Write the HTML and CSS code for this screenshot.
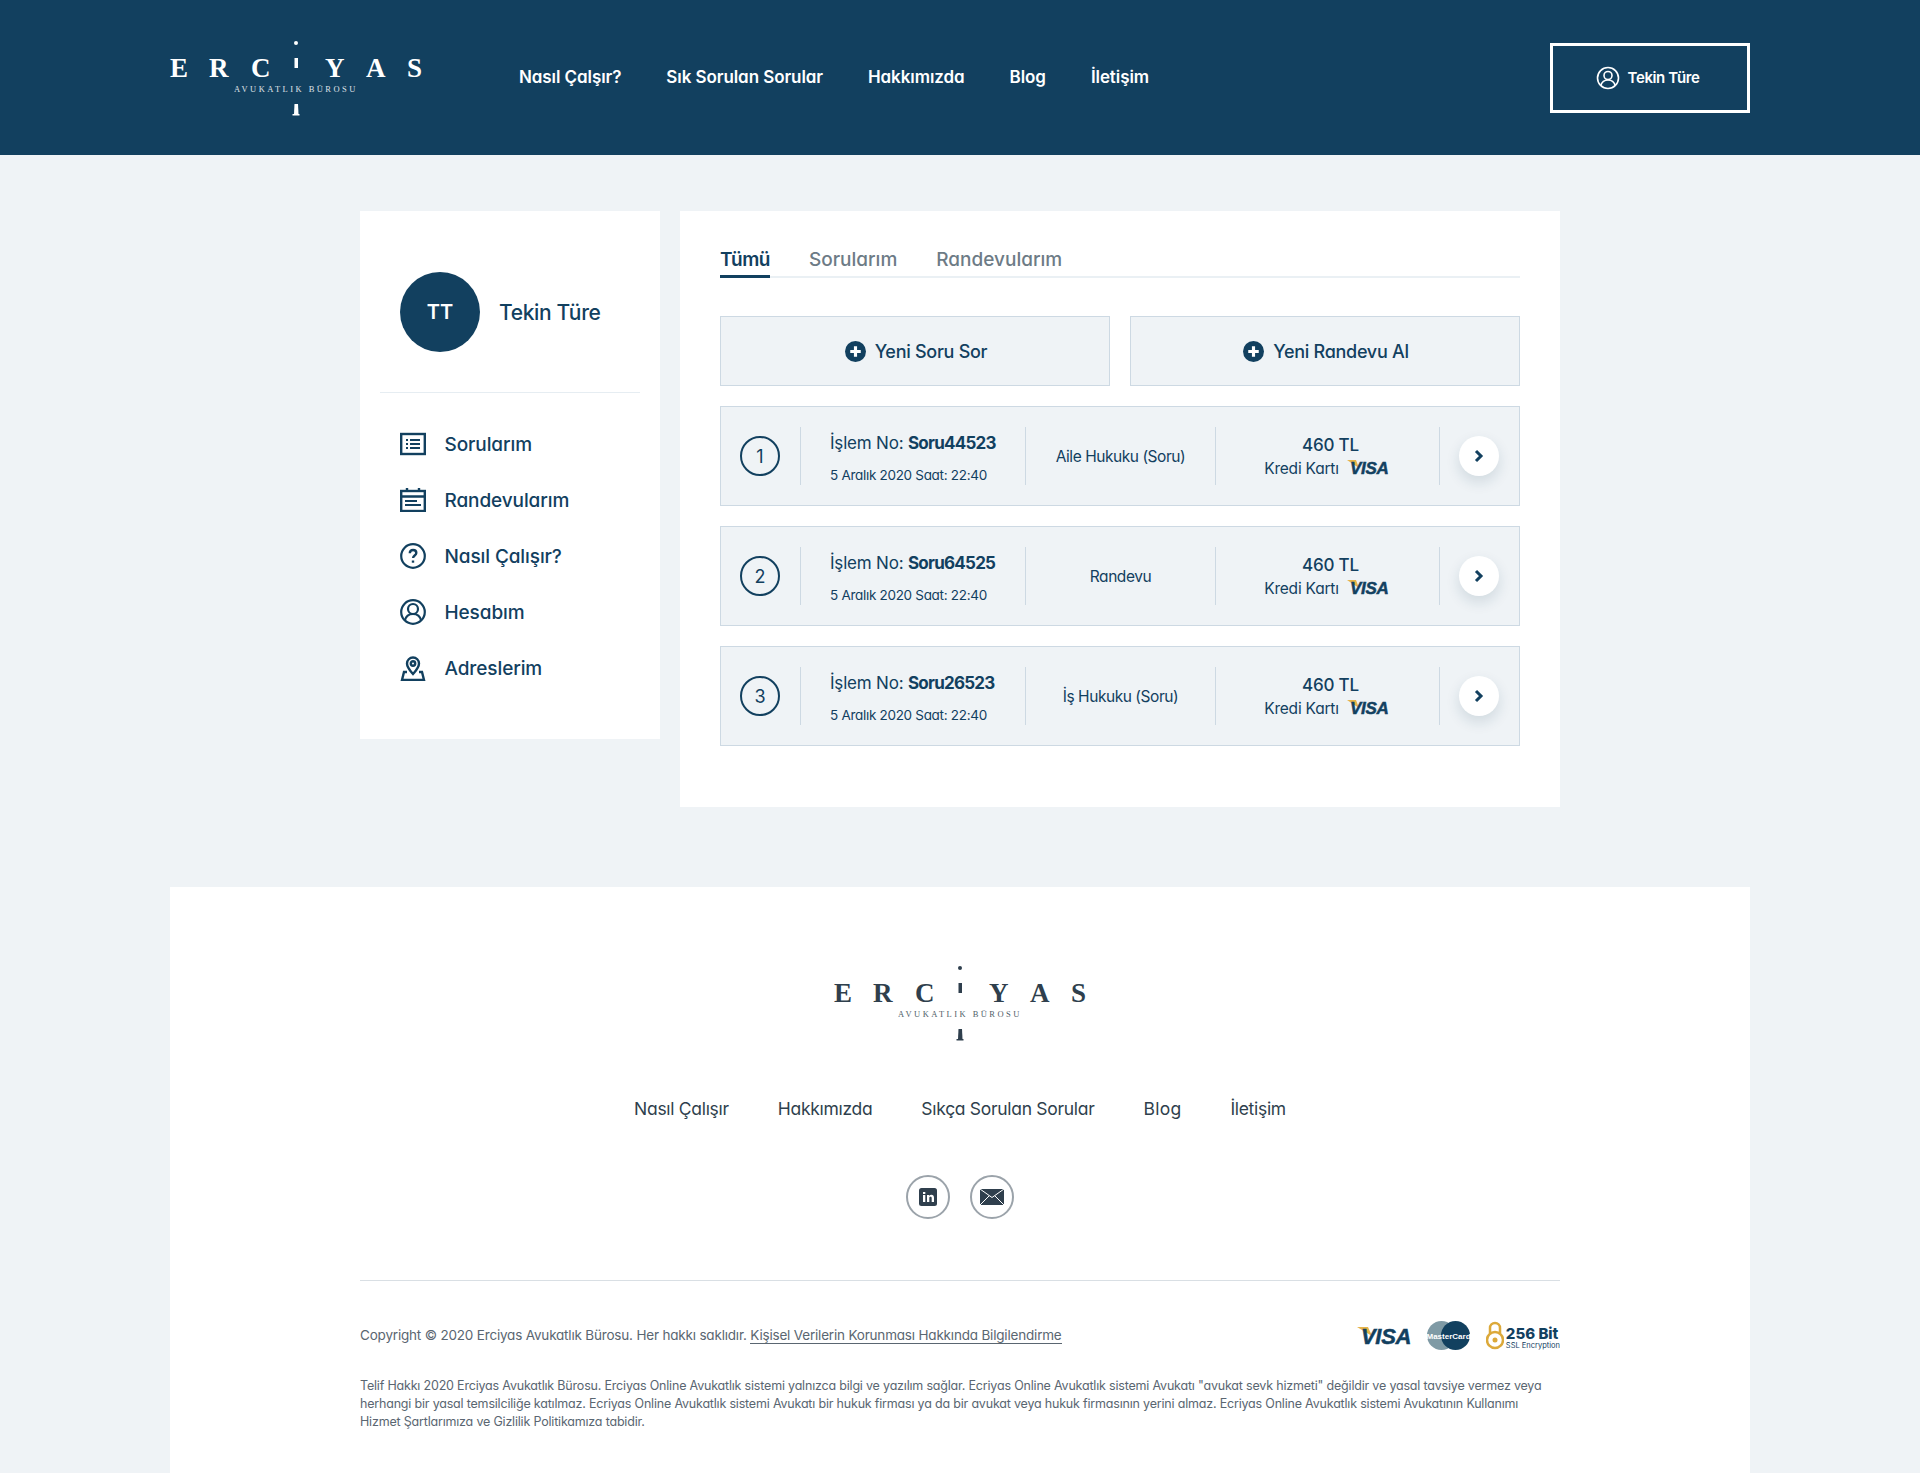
FILE: index.html
```html
<!DOCTYPE html>
<html lang="tr">
<head>
<meta charset="utf-8">
<title>Erciyas Avukatlık Bürosu</title>
<link rel="stylesheet" href="styles.css">
</head>
<body>
<header class="topbar">
  <a class="logo logo-light" href="#">
    <svg width="252" height="76" viewBox="0 0 252 76">
      <g class="logo-letters"><text x="0" y="41">E</text><text x="39" y="41">R</text><text x="81" y="41">C</text><text x="155" y="41">Y</text><text x="196" y="41">A</text><text x="237" y="41">S</text></g>
      <circle class="logo-mark" cx="126" cy="7" r="2"/><rect class="logo-mark" x="124.5" y="22" width="3.500" height="10"/><path class="logo-mark" d="M124.5 68h3.500l.5 10h-4.500z"/><path class="logo-mark" d="M122.500 78h7v1.500h-7z"/>
      <text class="logo-sub" x="64" y="56">AVUKATLIK BÜROSU</text>
    </svg>
  </a>
  <nav class="topnav">
    <a href="#">Nasıl Çalşır?</a><a href="#">Sık Sorulan Sorular</a><a href="#">Hakkımızda</a><a href="#">Blog</a><a href="#">İletişim</a>
  </nav>
  <a class="account" href="#">
    <svg class="i" width="24" height="24" viewBox="0 0 24 24" fill="none" stroke="currentColor" stroke-width="1.6"><circle cx="12" cy="12" r="10.500"/><circle cx="12" cy="9.500" r="4"/><path d="M4.800 19.500c1-3.500 3.600-5.500 7.200-5.500s6.200 2 7.200 5.500"/></svg>
    <span>Tekin Türe</span>
  </a>
</header>

<main class="page">
  <aside class="side">
    <div class="profile">
      <div class="avatar">TT</div>
      <div class="pname">Tekin Türe</div>
    </div>
    <ul class="menu">
      <li><svg width="26" height="24" viewBox="0 0 26 24" fill="none" stroke="currentColor" stroke-width="2.400"><rect x="1.200" y="2" width="23.600" height="20"/><path stroke-width="2" d="M6 8h2M10 8h10M6 12h2M10 12h10M6 16h2M10 16h10"/></svg><span>Sorularım</span></li>
      <li><svg width="26" height="24" viewBox="0 0 26 24" fill="none" stroke="currentColor" stroke-width="2.400"><rect x="1.200" y="3" width="23.600" height="20"/><path d="M1 8.500h24M7 0v4M19 0v4"/><path stroke-width="2" d="M5 13h12M5 17h16"/></svg><span>Randevularım</span></li>
      <li><svg width="26" height="26" viewBox="0 0 26 26" fill="none" stroke="currentColor" stroke-width="2.200"><circle cx="13" cy="13" r="11.800"/><path stroke-width="2.400" d="M9.800 10.300c0-2 1.500-3.300 3.300-3.300s3.200 1.200 3.200 3c0 2.500-3.200 2.600-3.200 5"/><path stroke-width="2.400" d="M13 17.500v2.200"/></svg><span>Nasıl Çalışır?</span></li>
      <li><svg width="26" height="26" viewBox="0 0 26 26" fill="none" stroke="currentColor" stroke-width="2.200"><circle cx="13" cy="13" r="11.800"/><circle cx="13" cy="10" r="5"/><path d="M4.800 21.500c1-4 4-6.500 8.200-6.500s7.200 2.500 8.200 6.500"/></svg><span>Hesabım</span></li>
      <li><svg width="26" height="26" viewBox="0 0 26 26" fill="none" stroke="currentColor" stroke-width="2.400"><path d="M13 19c-3-3.500-6-6.500-6-10.500a6 6 0 0 1 12 0c0 4-3 7-6 10.500z"/><circle cx="13" cy="8.500" r="2.200"/><path d="M7 17H4l-2 8h22l-2-8h-3"/></svg><span>Adreslerim</span></li>
    </ul>
  </aside>

  <section class="panel">
    <div class="tabs">
      <a class="tab active" href="#">Tümü</a><a class="tab" href="#">Sorularım</a><a class="tab" href="#">Randevularım</a>
    </div>
    <div class="actions">
      <a class="action" href="#"><svg width="21" height="21" viewBox="0 0 20 20"><circle cx="10" cy="10" r="10" fill="#12405f"/><path d="M10 5v10M5 10h10" stroke="#fff" stroke-width="3"/></svg>Yeni Soru Sor</a>
      <a class="action" href="#"><svg width="21" height="21" viewBox="0 0 20 20"><circle cx="10" cy="10" r="10" fill="#12405f"/><path d="M10 5v10M5 10h10" stroke="#fff" stroke-width="3"/></svg>Yeni Randevu Al</a>
    </div>

    <article class="row">
      <div class="cell c-num"><span class="num">1</span></div>
      <div class="cell c-info"><div class="ref">İşlem No: <b>Soru44523</b></div><div class="date">5 Aralık 2020 Saat: 22:40</div></div>
      <div class="cell c-cat">Aile Hukuku (Soru)</div>
      <div class="cell c-price"><div class="amount">460 TL</div><div class="pay">Kredi Kartı <svg class="visa" width="44" height="18" viewBox="0 0 44 18"><path class="flick" d="M0 1h9l3 8z"/><text x="3" y="15">VISA</text></svg></div></div>
      <div class="cell c-go"><a class="go" href="#"><svg width="10" height="14" viewBox="0 0 10 14" fill="none" stroke="#12405f" stroke-width="3"><path d="M2 2l5 5-5 5"/></svg></a></div>
    </article>
    <article class="row">
      <div class="cell c-num"><span class="num">2</span></div>
      <div class="cell c-info"><div class="ref">İşlem No: <b>Soru64525</b></div><div class="date">5 Aralık 2020 Saat: 22:40</div></div>
      <div class="cell c-cat">Randevu</div>
      <div class="cell c-price"><div class="amount">460 TL</div><div class="pay">Kredi Kartı <svg class="visa" width="44" height="18" viewBox="0 0 44 18"><path class="flick" d="M0 1h9l3 8z"/><text x="3" y="15">VISA</text></svg></div></div>
      <div class="cell c-go"><a class="go" href="#"><svg width="10" height="14" viewBox="0 0 10 14" fill="none" stroke="#12405f" stroke-width="3"><path d="M2 2l5 5-5 5"/></svg></a></div>
    </article>
    <article class="row">
      <div class="cell c-num"><span class="num">3</span></div>
      <div class="cell c-info"><div class="ref">İşlem No: <b>Soru26523</b></div><div class="date">5 Aralık 2020 Saat: 22:40</div></div>
      <div class="cell c-cat">İş Hukuku (Soru)</div>
      <div class="cell c-price"><div class="amount">460 TL</div><div class="pay">Kredi Kartı <svg class="visa" width="44" height="18" viewBox="0 0 44 18"><path class="flick" d="M0 1h9l3 8z"/><text x="3" y="15">VISA</text></svg></div></div>
      <div class="cell c-go"><a class="go" href="#"><svg width="10" height="14" viewBox="0 0 10 14" fill="none" stroke="#12405f" stroke-width="3"><path d="M2 2l5 5-5 5"/></svg></a></div>
    </article>
  </section>
</main>

<footer class="foot">
  <a class="logo logo-dark" href="#">
    <svg width="252" height="76" viewBox="0 0 252 76">
      <g class="logo-letters"><text x="0" y="41">E</text><text x="39" y="41">R</text><text x="81" y="41">C</text><text x="155" y="41">Y</text><text x="196" y="41">A</text><text x="237" y="41">S</text></g>
      <circle class="logo-mark" cx="126" cy="7" r="2"/><rect class="logo-mark" x="124.5" y="22" width="3.500" height="10"/><path class="logo-mark" d="M124.5 68h3.500l.5 10h-4.500z"/><path class="logo-mark" d="M122.500 78h7v1.500h-7z"/>
      <text class="logo-sub" x="64" y="56">AVUKATLIK BÜROSU</text>
    </svg>
  </a>
  <nav class="footnav">
    <a href="#">Nasıl Çalışır</a><a href="#">Hakkımızda</a><a href="#">Sıkça Sorulan Sorular</a><a class="wide" href="#">Blog</a><a href="#">İletişim</a>
  </nav>
  <div class="social">
    <a href="#"><svg width="18" height="18" viewBox="0 0 18 18"><rect width="18" height="18" rx="2.500" fill="#2f3f4d"/><path d="M4 7h2.300v7H4zM4 4h2.300v2H4zM8 7h2.200v1c.5-.8 1.300-1.200 2.200-1.200 1.700 0 2.600 1 2.600 3V14h-2.300v-3.800c0-.9-.4-1.400-1.200-1.400s-1.200.5-1.200 1.400V14H8z" fill="#fff"/></svg></a>
    <a href="#"><svg width="24" height="16" viewBox="0 0 24 16"><rect width="24" height="16" fill="#2f3f4d"/><path d="M0 0l12 8.500L24 0M0 16l9-9M24 16l-9-9" fill="none" stroke="#fff" stroke-width="1"/></svg></a>
  </div>
  <div class="legal">
    <div class="legal-top">
      <p class="copy">Copyright © 2020 Erciyas Avukatlık Bürosu. Her hakkı saklıdır. <a href="#">Kişisel Verilerin Korunması Hakkında Bilgilendirme</a></p>
      <div class="badges">
        <svg class="visa visa-lg" width="54" height="22" viewBox="0 0 54 22"><path class="flick" d="M0 3h11l4 9z"/><text x="4" y="20">VISA</text></svg>
        <svg width="43" height="29" viewBox="0 0 43 29"><circle cx="14.500" cy="14.500" r="14.500" fill="#7f9aa5"/><circle cx="28.500" cy="14.500" r="14.500" fill="#12405f"/><text class="mc" x="21.500" y="17.500" text-anchor="middle">MasterCard</text></svg>
        <div class="ssl">
          <svg width="18" height="29" viewBox="0 0 18 29"><path d="M4 12V7a5 5 0 0 1 10 0v5" fill="none" stroke="#dca93a" stroke-width="2.500"/><circle cx="9" cy="19" r="8" fill="none" stroke="#dca93a" stroke-width="2.500"/><circle cx="9" cy="19" r="2.500" fill="#dca93a"/></svg>
          <div class="ssl-t"><b>256 Bit</b><span>SSL Encryption</span></div>
        </div>
      </div>
    </div>
    <p class="terms">Telif Hakkı 2020 Erciyas Avukatlık Bürosu. Erciyas Online Avukatlık sistemi yalnızca bilgi ve yazılım sağlar. Ecriyas Online Avukatlık sistemi Avukatı "avukat sevk hizmeti" değildir ve yasal tavsiye vermez veya herhangi bir yasal temsilciliğe katılmaz. Ecriyas Online Avukatlık sistemi Avukatı bir hukuk firması ya da bir avukat veya hukuk firmasının yerini almaz. Ecriyas Online Avukatlık sistemi Avukatının Kullanımı Hizmet Şartlarımıza ve Gizlilik Politikamıza tabidir.</p>
  </div>
</footer>
</body>
</html>
```
FILE: styles.css
```css
* { box-sizing: border-box; }
html, body { margin: 0; padding: 0; }
body {
  background: #eff3f6;
  color: #12405f;
  font-family: Inter, "Noto Sans", sans-serif;
  font-feature-settings: "cv11" 1;
  height: 1473px;
  overflow: hidden;
}
a { color: inherit; text-decoration: none; }
ul { list-style: none; margin: 0; padding: 0; }
p { margin: 0; }

.topbar {
  height: 155px;
  background: #12405f;
  color: #fff;
  display: flex;
  align-items: center;
  padding: 0 170px;
}
.logo { display: block; line-height: 0; }
.logo svg { overflow: visible; display: block; }
.logo-letters text { font-family: "Liberation Serif", serif; font-weight: 700; font-size: 27px; fill: currentColor; }
.logo-sub { font-family: "Liberation Serif", serif; font-size: 8.500px; letter-spacing: 2.450px; fill: currentColor; opacity: .85; }
.logo-mark { fill: currentColor; }
.logo-light { margin-bottom: 8px; }
.logo-dark { color: #2f3f4d; margin: 0 auto; width: 252px; }

.topnav { display: flex; gap: 45px; margin-left: 97px; padding-bottom: 2px; font-size: 17px; font-weight: 600; letter-spacing: -.08px; }
.account {
  margin-left: auto;
  width: 200px;
  height: 70px;
  border: 3px solid #fff;
  display: flex;
  align-items: center;
  justify-content: center;
  gap: 8px;
  padding-right: 5px;
  font-size: 15px;
  font-weight: 600;
  letter-spacing: -.4px;
}

.page { width: 1200px; margin: 56px auto 80px; display: flex; gap: 20px; align-items: flex-start; }
.side { width: 300px; height: 528px; background: #fff; padding: 61px 20px 0; }
.profile { display: flex; align-items: center; gap: 20px; padding: 0 20px 40px; border-bottom: 1px solid #e6edf2; }
.avatar {
  width: 80px; height: 80px; border-radius: 50%;
  background: #12405f; color: #fff;
  display: flex; align-items: center; justify-content: center;
  font-size: 20px; font-weight: 600;
}
.pname { font-size: 21px; font-weight: 500; letter-spacing: -.35px; margin-left: -1px; }
.menu { padding: 23px 20px 0; }
.menu li { height: 56px; display: flex; align-items: center; gap: 18.500px; font-size: 19px; font-weight: 500; letter-spacing: -.1px; }
.menu svg { flex: none; }

.panel { width: 880px; height: 596px; background: #fff; padding: 30px 40px 0; }
.tabs { display: flex; gap: 39px; height: 37px; border-bottom: 2px solid #eaf0f4; }
.tab { height: 37px; padding-top: 7px; font-size: 19px; font-weight: 500; color: #6d7b86; letter-spacing: 0; }
.tab.active { color: #12405f; border-bottom: 3px solid #12405f; font-weight: 600; letter-spacing: -.5px; }
.actions { display: flex; gap: 20px; margin-top: 38px; }
.action {
  flex: 1; height: 70px;
  background: #eff3f6; border: 1px solid #cdd9e3;
  display: flex; align-items: center; justify-content: center; gap: 9px;
  padding-left: 2px;
  font-size: 18px; font-weight: 500; letter-spacing: -.28px;
}
.row {
  height: 100px; margin-top: 20px;
  background: #eff3f6; border: 1px solid #cdd9e3;
  display: grid;
  grid-template-columns: 79px 225px 190px 224px 1fr;
  align-items: center;
}
.cell { height: 58px; display: flex; align-items: center; border-left: 1px solid #cdd9e3; }
.c-num { border-left: 0; justify-content: center; padding-right: 1px; }
.num {
  width: 40px; height: 40px; border-radius: 50%;
  border: 2px solid #12405f;
  display: flex; align-items: center; justify-content: center;
  font-size: 18px; font-weight: 400;
}
.c-info { flex-direction: column; align-items: flex-start; justify-content: center; padding: 4px 0 0 29px; }
.ref { font-size: 17px; font-weight: 400; letter-spacing: -.2px; }
.ref b { font-weight: 700; letter-spacing: -.75px; }
.date { font-size: 13.500px; margin-top: 14px; letter-spacing: -.3px; }
.c-cat { justify-content: center; font-size: 15.500px; font-weight: 400; letter-spacing: -.45px; }
.c-price { flex-direction: column; justify-content: center; font-size: 16px; }
.amount { font-size: 17px; font-weight: 500; letter-spacing: -.2px; margin-left: 6px; }
.pay { display: flex; align-items: center; gap: 8px; font-size: 15.500px; letter-spacing: -.2px; margin-top: 4px; }
.visa { overflow: visible; }
.visa text { font-family: "Liberation Sans", sans-serif; font-weight: 700; font-style: italic; font-size: 17px; letter-spacing: -.3px; fill: #12405f; stroke: #12405f; stroke-width: .5px; }
.visa-lg text { font-size: 22px; }
.visa .flick { fill: #e6b44a; }
.c-go { justify-content: center; padding-right: 1px; }
.go {
  width: 40px; height: 40px; border-radius: 50%;
  background: #fff; box-shadow: 0 6px 14px rgba(18,64,95,.14);
  display: flex; align-items: center; justify-content: center;
}

.foot { width: 1580px; height: 586px; margin: 0 auto; background: #fff; padding: 74px 190px 0; color: #2f3f4d; }
.footnav { display: flex; justify-content: center; gap: 49px; margin-top: 61px; font-size: 17.500px; letter-spacing: -.3px; }
.footnav .wide { letter-spacing: .25px; }
.social { display: flex; justify-content: center; gap: 20px; margin-top: 56px; }
.social a {
  width: 44px; height: 44px; border-radius: 50%;
  border: 2px solid #9ba3aa;
  display: flex; align-items: center; justify-content: center;
}
.legal { margin-top: 61px; border-top: 1px solid #d9dfe4; }
.legal-top { display: flex; justify-content: space-between; align-items: center; height: 96px; padding-top: 12px; }
.copy { font-size: 13.500px; color: #5a6671; letter-spacing: -.19px; }
.copy a { border-bottom: 1px solid #5a6671; }
.badges { display: flex; align-items: center; gap: 16px; }
.mc { font-family: "Liberation Sans", sans-serif; font-size: 8px; font-weight: 700; fill: #fff; }
.ssl { display: flex; align-items: center; gap: 2px; }
.ssl-t { display: flex; flex-direction: column; color: #12405f; padding-top: 5px; }
.ssl-t b { font-size: 15px; line-height: 15px; font-weight: 800; }
.ssl-t span { font-size: 7.500px; line-height: 9px; }
.terms { font-size: 12.500px; line-height: 18px; color: #5a6671; letter-spacing: -.19px; padding-right: 15px; }
```
